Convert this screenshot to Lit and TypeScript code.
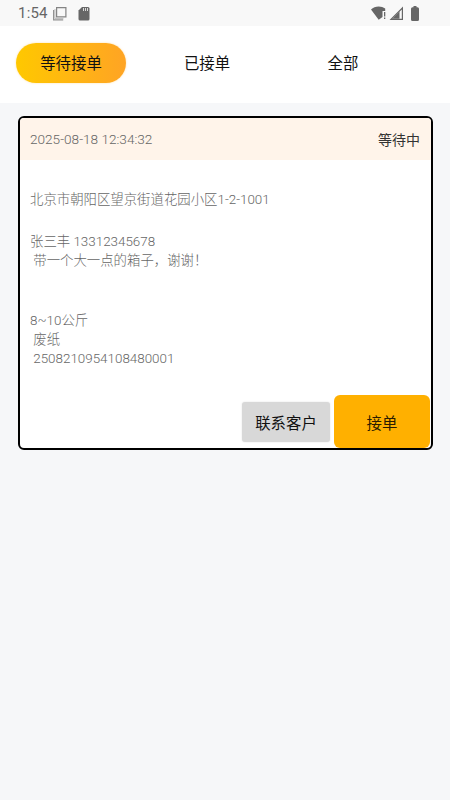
import { LitElement, html, css } from "lit";
import { customElement } from "lit/decorators.js";

@customElement("app-root")
export class AppRoot extends LitElement {
  static styles = css`
    :host {
      display: block;
      width: 450px;
      height: 800px;
      background: #f6f7f9;
      font-family: Roboto, "Noto Sans CJK SC", sans-serif;
      overflow: hidden;
    }
    .status {
      height: 26px;
      background: #f8f8f8;
      display: flex;
      align-items: center;
      padding: 0 31px 0 18px;
      color: #666;
      font-size: 15px;
      box-sizing: border-box;
    }
    .time { margin-right: 4px; letter-spacing: 0.2px; }
    .status svg { display: block; fill: #666; }
    .sd { margin-left: 11px; }
    .spacer { flex: 1; }
    .sig { margin-left: 1px; }
    .bat { margin-left: 7px; }
    .tabs {
      height: 77px;
      box-sizing: border-box;
      background: #fff;
      display: flex;
      align-items: flex-start;
      padding: 17px 0 0 16px;
      font-size: 15.4px;
      color: #111;
    }
    .tab { text-align: center; line-height: 42px; height: 40px; }
    .pill {
      width: 110px;
      border-radius: 20px;
      background: linear-gradient(90deg, #ffc800, #ffa424);
      box-shadow: 0 0 2px rgba(255, 190, 60, 0.5);
    }
    .t2 { width: 50px; margin-left: 56px; }
    .t3 { width: 40px; margin-left: 91px; }
    .card {
      margin: 13px 17px 0 18px;
      height: 334px;
      box-sizing: border-box;
      border: 2px solid #000;
      border-radius: 6px;
      background: #fff;
      display: flex;
      flex-direction: column;
      overflow: hidden;
    }
    .head {
      height: 42px;
      flex: none;
      background: #fff4ea;
      display: flex;
      align-items: center;
      justify-content: space-between;
      padding: 0 11px 0 10px;
      font-size: 13.6px;
      font-weight: 300;
      color: #666;
    }
    .state { color: #333; font-size: 14px; font-weight: 400; }
    .body {
      padding: 30px 0 0 10px;
      font-size: 13.4px;
      font-weight: 300;
      line-height: 19.6px;
      color: #666;
      flex: 1;
    }
    .body div { height: 19.6px; white-space: pre; }
    .gap { margin-top: 22px; }
    .gap2 { margin-top: 40px; }
    .last { margin-top: -1px; }
    .actions {
      display: flex;
      justify-content: flex-end;
      align-items: flex-end;
      gap: 4px;
      flex: none;
      margin-top: -10px;
      padding-right: 1px;
    }
    .btn { display: flex; align-items: center; justify-content: center; color: #111; font-size: 15.4px; }
    .contact {
      width: 88px;
      height: 40px;
      margin-bottom: 6px;
      background: #d8d8d8;
      border-radius: 3px;
      box-shadow: 0 0 2px rgba(0, 0, 0, 0.12);
    }
    .accept {
      width: 96px;
      height: 53px;
      background: #ffb000;
      border-radius: 6px;
      color: #2b1c00;
    }
  `;

  render() {
    return html`
      <div class="status">
        <span class="time">1:54</span>
        <svg width="15" height="15" viewBox="0 0 15 15">
          <path d="M4 1h10.500v10.500H4zM5.200 2.200v8.100h8.100V2.200z" fill-rule="evenodd" opacity=".8"/>
          <path d="M1 4h1.200v9.300h9v1.200H1z" opacity=".7"/>
          <path d="M2.600 3h.8v9h8v.8H2.600z" opacity=".5"/>
        </svg>
        <svg class="sd" width="12" height="15" viewBox="0 0 12 15">
          <path d="M4 1h6a1.500 1.500 0 0 1 1.500 1.500V13a1.500 1.500 0 0 1-1.500 1.500H2A1.500 1.500 0 0 1 .5 13V4.500z"/>
          <path d="M5 2h.8v3H5zM7 2h.8v3H7zM9 2h.8v3H9z" fill="#f8f8f8"/>
        </svg>
        <span class="spacer"></span>
        <svg width="17" height="14" viewBox="0 0 17 14">
          <path d="M0 3.500C2 1.700 4.800.6 7.700.6c2.400 0 4.700.7 6.500 2V5h-2.700v6l-3.800 2.800z"/>
          <path d="M13 6h1.300v4.500H13zM13 11.500h1.300V13H13z"/>
        </svg>
        <svg class="sig" width="15" height="14" viewBox="0 0 15 14">
          <path d="M14 .5V14H.5zM12.800 3.400 3.300 12.800h9.500z" fill-rule="evenodd"/>
          <path d="M10.500 5.500 3.300 12.800h7.200z"/>
        </svg>
        <svg class="bat" width="8" height="15" viewBox="0 0 8 15">
          <path d="M2.500 0h3v1.200h1A1.500 1.500 0 0 1 8 2.700v10.800A1.500 1.500 0 0 1 6.500 15h-5A1.500 1.500 0 0 1 0 13.500V2.700a1.500 1.500 0 0 1 1.500-1.500h1z"/>
        </svg>
      </div>
      <div class="tabs">
        <div class="tab pill">等待接单</div>
        <div class="tab t2">已接单</div>
        <div class="tab t3">全部</div>
      </div>
      <div class="card">
        <div class="head">
          <span>2025-08-18 12:34:32</span>
          <span class="state">等待中</span>
        </div>
        <div class="body">
          <div>北京市朝阳区望京街道花园小区1-2-1001</div>
          <div class="gap">张三丰 13312345678</div>
          <div> 带一个大一点的箱子，谢谢！</div>
          <div class="gap2">8~10公斤</div>
          <div> 废纸</div>
          <div class="last"> 2508210954108480001</div>
        </div>
        <div class="actions">
          <div class="btn contact">联系客户</div>
          <div class="btn accept">接单</div>
        </div>
      </div>
    `;
  }
}
